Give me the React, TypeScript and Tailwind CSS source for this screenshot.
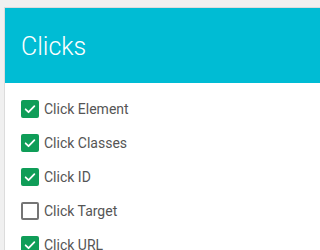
import React from "react";

const items: { label: string; checked: boolean }[] = [
  { label: "Click Element", checked: true },
  { label: "Click Classes", checked: true },
  { label: "Click ID", checked: true },
  { label: "Click Target", checked: false },
  { label: "Click URL", checked: true },
];

function Box({ checked }: { checked: boolean }) {
  if (checked) {
    return (
      <div className="w-[18px] h-[18px] rounded-[2px] bg-[#0f9d58] flex items-center justify-center shrink-0">
        <svg width="14" height="14" viewBox="0 0 24 24" fill="none">
          <path d="M4.5 12.5l5 5L19.5 7" stroke="white" strokeWidth="3" strokeLinecap="round" strokeLinejoin="round" />
        </svg>
      </div>
    );
  }
  return <div className="w-[18px] h-[18px] rounded-[2px] border-2 border-[#757575] bg-white shrink-0" />;
}

export default function App() {
  return (
    <div className="w-full h-screen bg-[#f0f0f0] overflow-hidden pl-1 pt-[7px]" style={{ fontFamily: "Roboto, sans-serif" }}>
      <div className="w-[calc(100%+20px)] h-[calc(100%+20px)] border border-[#dcdcdc] bg-white">
        <div className="h-[75px] bg-[#00bcd4] flex items-center pl-[16px] pt-[1px]">
          <span className="text-white text-[25px] font-light leading-none">Clicks</span>
        </div>
        <div className="flex flex-col gap-[16px] pl-[16px] pt-[17px]">
          {items.map((it) => (
            <div key={it.label} className="flex items-center gap-[5px] h-[18px]">
              <Box checked={it.checked} />
              <span className="text-[14px] text-[#555] leading-none">{it.label}</span>
            </div>
          ))}
        </div>
      </div>
    </div>
  );
}
